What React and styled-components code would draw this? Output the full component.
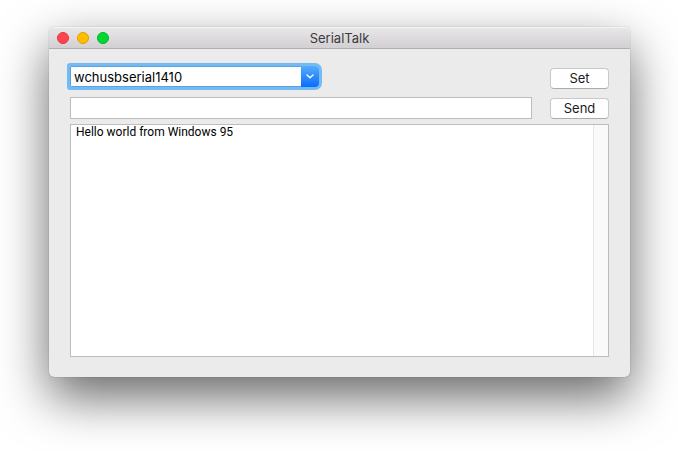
import React, { useState } from 'react'
import styled, { createGlobalStyle } from 'styled-components'

const GlobalStyle = createGlobalStyle`
  * {
    box-sizing: border-box;
  }

  body {
    margin: 0;
    background: #fff;
    font-family: Inter, 'Liberation Sans', sans-serif;
    font-size: 13px;
    color: #000;
  }
`

const Desktop = styled.main`
  display: flex;
  min-height: 100vh;
  padding: 27px 48px 74px 49px;
  overflow: hidden;
`

const Window = styled.section`
  flex: 1;
  display: flex;
  flex-direction: column;
  min-width: 0;
  border-radius: 5px;
  background: #ebebeb;
  box-shadow: 0 0 1px rgba(0, 0, 0, 0.5), 0 20px 50px rgba(0, 0, 0, 0.6);
`

const TitleBar = styled.header`
  display: grid;
  grid-template-columns: 1fr auto 1fr;
  align-items: center;
  height: 22px;
  padding: 0 8px;
  border-bottom: 1px solid #b1afb1;
  border-radius: 5px 5px 0 0;
  background: linear-gradient(#e9e7e9, #d2d0d2);
  box-shadow: inset 0 1px #f5f4f5;
`

const Title = styled.h1`
  margin: 0;
  font-size: 13px;
  line-height: 20px;
  font-weight: 400;
  color: #3c3a3c;
`

const Lights = styled.div`
  display: flex;
  gap: 8px;
`

const Light = styled.button`
  width: 12px;
  height: 12px;
  padding: 0;
  border: 1px solid ${({ $edge }) => $edge};
  border-radius: 50%;
  background: ${({ $color }) => $color};
`

const Content = styled.div`
  flex: 1;
  display: flex;
  flex-direction: column;
  padding: 17px 21px 20px;
`

const Row = styled.form`
  display: flex;
  align-items: flex-end;
  justify-content: space-between;
  gap: 18px;
  margin-bottom: ${({ $gap }) => $gap}px;
`

const Combo = styled.div`
  position: relative;
  width: 249px;
  height: 21px;
  margin-bottom: 2px;
  border-radius: 1px 4px 4px 1px;
  box-shadow: 0 0 0 3px #75bbf3;
`

const PortSelect = styled.select`
  display: block;
  width: 100%;
  height: 100%;
  padding: 0 22px 0 3px;
  appearance: none;
  border: 1px solid #5ba3e0;
  border-radius: 1px 4px 4px 1px;
  outline: none;
  background: #fff;
  color: #000;
  font: inherit;
`

const Arrow = styled.span`
  position: absolute;
  top: 0;
  right: 0;
  bottom: 0;
  display: flex;
  align-items: center;
  justify-content: center;
  width: 18px;
  border-radius: 0 4px 4px 0;
  background: linear-gradient(#55acfb, #0a6dfd);
  pointer-events: none;
`

const TextField = styled.input`
  flex: 1;
  min-width: 0;
  height: 22px;
  padding: 0 4px;
  border: 1px solid #bdbdbd;
  border-radius: 0;
  outline: none;
  background: #fff;
  font: inherit;
`

const PushButton = styled.button`
  width: 59px;
  height: 21px;
  padding: 0;
  border: 1px solid #c8c8c8;
  border-bottom-color: #acacac;
  border-radius: 4px;
  background: #fff;
  color: #1c1c1c;
  font: inherit;
  line-height: 19px;
`

const LogFrame = styled.div`
  flex: 1;
  display: flex;
  border: 1px solid #bdbdbd;
  background: #fff;
`

const Log = styled.textarea`
  flex: 1;
  min-width: 0;
  padding: 0 5px;
  border: 0;
  outline: none;
  resize: none;
  background: #fff;
  color: #000;
  font-family: Roboto, 'Liberation Sans', sans-serif;
  font-size: 12px;
  line-height: 14px;
`

const ScrollTrack = styled.div`
  width: 15px;
  border-left: 1px solid #e6e6e6;
  background: #fafafa;
`

const lights = [
  { label: 'Close', color: '#ff444d', edge: '#e2353e' },
  { label: 'Minimize', color: '#ffbd00', edge: '#e0a000' },
  { label: 'Zoom', color: '#00d72f', edge: '#00b624' },
]

const App = () => {
  const [message, setMessage] = useState('')
  const [log, setLog] = useState('Hello world from Windows 95')

  const handleSend = (e) => {
    e.preventDefault()
    if (!message) return
    setLog(`${log}\n${message}`)
    setMessage('')
  }

  return (
    <>
      <GlobalStyle />
      <Desktop>
        <Window>
          <TitleBar>
            <Lights>
              {lights.map(({ label, color, edge }) => (
                <Light key={label} type="button" aria-label={label} $color={color} $edge={edge} />
              ))}
            </Lights>
            <Title>SerialTalk</Title>
          </TitleBar>
          <Content>
            <Row $gap={8} onSubmit={(e) => e.preventDefault()}>
              <Combo>
                <PortSelect aria-label="Serial port">
                  <option>wchusbserial1410</option>
                </PortSelect>
                <Arrow>
                  <svg width="8" height="5" viewBox="0 0 8 5" fill="none" stroke="#fff" strokeWidth="1.4" strokeLinecap="round" strokeLinejoin="round">
                    <path d="M1 1l3 2.8L7 1" />
                  </svg>
                </Arrow>
              </Combo>
              <PushButton type="submit">Set</PushButton>
            </Row>
            <Row $gap={5} onSubmit={handleSend}>
              <TextField
                aria-label="Message"
                value={message}
                onChange={(e) => setMessage(e.target.value)}
              />
              <PushButton type="submit">Send</PushButton>
            </Row>
            <LogFrame>
              <Log aria-label="Received text" readOnly value={log} />
              <ScrollTrack />
            </LogFrame>
          </Content>
        </Window>
      </Desktop>
    </>
  )
}

export default App
